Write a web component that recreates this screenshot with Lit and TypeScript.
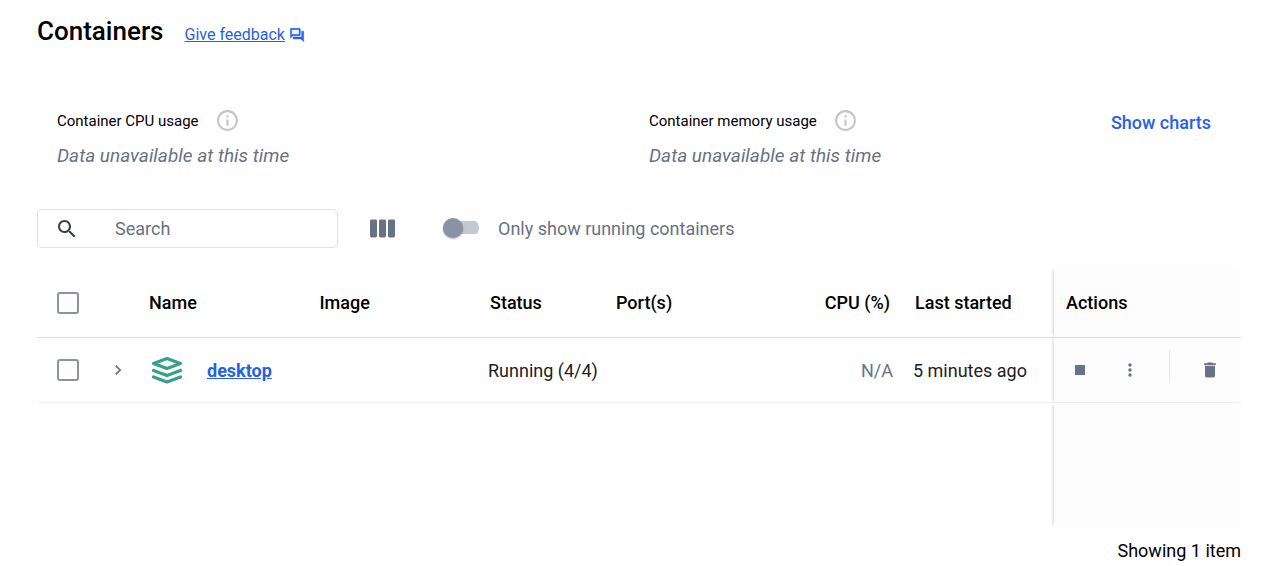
import { LitElement, html, css, svg } from "lit";
import { customElement, property, state } from "lit/decorators.js";

interface ContainerRow {
  name: string;
  image: string;
  status: string;
  ports: string;
  cpu: string;
  started: string;
}

const rows: ContainerRow[] = [
  { name: "desktop", image: "", status: "Running (4/4)", ports: "", cpu: "N/A", started: "5 minutes ago" },
];

const icon = (size: number, paths: unknown, viewBox = "0 0 24 24") => html`
  <svg width=${size} height=${size} viewBox=${viewBox} fill="currentColor" aria-hidden="true">${paths}</svg>
`;

const feedbackPath = svg`<path stroke="currentColor" stroke-width=".6" d="M15 4v7H5.17L4 12.17V4h11m1-2H3c-.55 0-1 .45-1 1v14l4-4h10c.55 0 1-.45 1-1V3c0-.55-.45-1-1-1zm5 4h-2v9H6v2c0 .55.45 1 1 1h11l4 4V7c0-.55-.45-1-1-1z"/>`;
const infoPath = svg`<path d="M11 7h2v2h-2zm0 4h2v6h-2zm1-9C6.48 2 2 6.48 2 12s4.48 10 10 10 10-4.48 10-10S17.52 2 12 2zm0 18c-4.41 0-8-3.59-8-8s3.59-8 8-8 8 3.59 8 8-3.59 8-8 8z"/>`;
const searchPath = svg`<path d="M15.5 14h-.79l-.28-.27C15.41 12.59 16 11.11 16 9.5 16 5.91 13.09 3 9.5 3S3 5.91 3 9.5 5.91 16 9.5 16c1.61 0 3.09-.59 4.23-1.57l.27.28v.79l5 4.99L20.49 19l-4.99-5zm-6 0C7.01 14 5 11.99 5 9.5S7.01 5 9.5 5 14 7.01 14 9.5 11.99 14 9.5 14z"/>`;
const columnsPath = svg`<rect x="0" y="0" width="7" height="18" rx="1.4"/><rect x="9" y="0" width="7" height="18" rx="1.4"/><rect x="18" y="0" width="7" height="18" rx="1.4"/>`;
const chevronPath = svg`<path d="M10 6 8.59 7.41 13.17 12l-4.58 4.59L10 18l6-6z"/>`;
const stopPath = svg`<path d="M6 6h12v12H6z"/>`;
const morePath = svg`<path d="M12 8c1.1 0 2-.9 2-2s-.9-2-2-2-2 .9-2 2 .9 2 2 2zm0 2c-1.1 0-2 .9-2 2s.9 2 2 2 2-.9 2-2-.9-2-2-2zm0 6c-1.1 0-2 .9-2 2s.9 2 2 2 2-.9 2-2-.9-2-2-2z"/>`;
const deletePath = svg`<path d="M6 19c0 1.1.9 2 2 2h8c1.1 0 2-.9 2-2V7H6v12zM19 4h-3.500l-1-1h-5l-1 1H5v2h14V4z"/>`;
const stackPath = svg`<g fill="none" stroke="currentColor" stroke-width="3.200" stroke-linecap="round" stroke-linejoin="round"><path d="M2.500 7.500 16 2.500l13.500 5L16 12.500z"/><path d="M2.500 14.500 16 19.500l13.500-5"/><path d="M2.500 21 16 26l13.500-5"/></g>`;

@customElement("usage-stat")
export class UsageStat extends LitElement {
  @property() label = "";

  static styles = css`
    :host { display: block; }
    svg { display: block; }
    .head { display: flex; align-items: center; gap: 16px; height: 25px; font-size: 15px; color: #000; }
    .info { display: flex; color: #c4c4c6; }
    .value { margin: 11px 0 0; font-size: 19px; line-height: 24px; font-style: italic; color: #677285; }
  `;

  render() {
    return html`
      <div class="head"><span>${this.label}</span><span class="info">${icon(25, infoPath)}</span></div>
      <p class="value">Data unavailable at this time</p>
    `;
  }
}

@customElement("app-root")
export class AppRoot extends LitElement {
  @state() private query = "";
  @state() private onlyRunning = false;

  static styles = css`
    :host {
      display: block;
      box-sizing: border-box;
      padding: 14px 22px 0 37px;
      background: #fff;
      color: #000;
      font-family: Roboto, "Liberation Sans", sans-serif;
      font-size: 18px;
      line-height: 24px;
    }
    * { box-sizing: border-box; }
    button { display: flex; align-items: center; justify-content: center; padding: 0; border: 0; background: none; font: inherit; color: #677285; cursor: pointer; }
    svg { display: block; }

    .title { display: flex; align-items: center; gap: 21px; }
    h1 { margin: 0; font-size: 26px; line-height: 34px; font-weight: 500; }
    .feedback { display: flex; align-items: center; gap: 4px; padding-top: 8px; font-size: 16px; line-height: 24px; color: #2560ed; }
    .feedback svg { flex: none; }

    .usage { display: grid; grid-template-columns: 1fr 1fr; align-items: start; margin-top: 60px; padding: 0 30px 0 20px; }
    .memory { display: flex; justify-content: space-between; align-items: start; padding-left: 15px; }
    .charts { height: 30px; font-weight: 500; color: #2560ed; }

    .toolbar { display: flex; align-items: center; margin-top: 41px; }
    .search { display: flex; align-items: center; gap: 36px; width: 301px; height: 39px; padding: 0 17px; border: 1px solid #e1e2e6; border-radius: 5px; color: #393f49; }
    .search svg { flex: none; }
    .search input { flex: 1; min-width: 0; padding: 0; border: 0; outline: 0; background: none; font: inherit; color: #000; }
    .search input::placeholder { color: #677285; opacity: 1; }
    .columns { margin: 0 48px 0 32px; }
    .toggle { display: flex; align-items: center; gap: 19px; color: #677285; }
    .switch {
      appearance: none;
      width: 36px;
      height: 20px;
      margin: 0 0 2px;
      background: linear-gradient(#c4c8d1, #c4c8d1) center / 100% 13px no-repeat;
      border-radius: 10px;
    }
    .switch::before { content: ""; display: block; width: 20px; height: 20px; border-radius: 50%; background: #8993a5; box-shadow: 0 1px 2px rgba(0, 0, 0, 0.3); }
    .switch:checked::before { margin-left: auto; background: #2560ed; }

    table { width: 100%; margin-top: 20px; table-layout: fixed; border-collapse: separate; border-spacing: 0; white-space: nowrap; }
    .c-check { width: 62px; }
    .c-expand { width: 38px; }
    .c-status { width: 126px; }
    .c-ports { width: 176px; }
    .c-cpu { width: 123px; }
    .c-started { width: 151px; }
    .c-actions { width: 187px; }
    th { height: 70px; padding: 0 12px; border-bottom: 1px solid #dcdde0; text-align: left; font-weight: 500; }
    th.num { padding-right: 13px; text-align: right; }
    td { height: 65px; padding: 2px 10px 0; border-bottom: 1px solid #f1f1f3; color: #1e2024; }
    td.num { text-align: right; color: #677285; }
    th.check, td.check { padding: 0 0 0 20px; }
    td.expand, td.name { padding: 0; }
    .check input { appearance: none; display: block; width: 22px; height: 22px; margin: 0; border: 2px solid #8993a8; border-radius: 3px; background: #fff; }
    .check input:checked { background: #2560ed; }
    .side { background: #fdfdfd; box-shadow: -3px 0 3px -2px rgba(0, 0, 0, 0.18); }
    tr.rest td { height: 124px; border: 0; }
    .expand button { width: 38px; height: 38px; }
    .identity { display: flex; align-items: center; gap: 24px; padding-left: 14px; color: #36a18b; }
    .identity svg { flex: none; }
    .identity a { padding-top: 2px; font-weight: 700; color: #2560ed; }
    td.side { padding: 0 15px; }
    .actions, .delete-group { display: flex; align-items: center; }
    .actions button { width: 22px; height: 30px; }
    .more, .delete-group { margin-left: 28px; }
    .rule { width: 1px; height: 32px; margin-bottom: 8px; background: #e9eaed; }
    .delete-group button { margin-left: 29px; }
    .footer { margin: 12px 0 0; text-align: right; }
  `;

  private get visibleRows() {
    const q = this.query.toLowerCase();
    return rows.filter(
      (r) => r.name.toLowerCase().includes(q) && (!this.onlyRunning || r.status.startsWith("Running")),
    );
  }

  private renderRow(r: ContainerRow) {
    return html`
      <tr>
        <td class="check"><input type="checkbox" aria-label="Select ${r.name}" /></td>
        <td class="expand"><button aria-label="Expand ${r.name}">${icon(20, chevronPath)}</button></td>
        <td class="name">
          <div class="identity">${icon(32, stackPath, "0 -2 32 32")}<a href="#${r.name}">${r.name}</a></div>
        </td>
        <td>${r.image}</td>
        <td>${r.status}</td>
        <td>${r.ports}</td>
        <td class="num">${r.cpu}</td>
        <td>${r.started}</td>
        <td class="side">
          <div class="actions">
            <button aria-label="Stop">${icon(20, stopPath)}</button>
            <button class="more" aria-label="More actions">${icon(20, morePath)}</button>
            <div class="delete-group">
              <span class="rule"></span>
              <button aria-label="Delete">${icon(20, deletePath)}</button>
            </div>
          </div>
        </td>
      </tr>
    `;
  }

  render() {
    const shown = this.visibleRows;
    return html`
      <header class="title">
        <h1>Containers</h1>
        <a class="feedback" href="#feedback"><span>Give feedback</span>${icon(16, feedbackPath)}</a>
      </header>

      <section class="usage">
        <usage-stat label="Container CPU usage"></usage-stat>
        <div class="memory">
          <usage-stat label="Container memory usage"></usage-stat>
          <button class="charts">Show charts</button>
        </div>
      </section>

      <div class="toolbar">
        <label class="search">
          ${icon(24, searchPath)}
          <input
            type="text"
            placeholder="Search"
            aria-label="Search"
            .value=${this.query}
            @input=${(e: Event) => (this.query = (e.target as HTMLInputElement).value)}
          />
        </label>
        <button class="columns" aria-label="Choose columns">${icon(25, columnsPath, "0 -3.500 25 25")}</button>
        <label class="toggle">
          <input
            class="switch"
            type="checkbox"
            role="switch"
            .checked=${this.onlyRunning}
            @change=${(e: Event) => (this.onlyRunning = (e.target as HTMLInputElement).checked)}
          />
          <span>Only show running containers</span>
        </label>
      </div>

      <table>
        <colgroup>
          <col class="c-check" /><col class="c-expand" /><col /><col /><col class="c-status" />
          <col class="c-ports" /><col class="c-cpu" /><col class="c-started" /><col class="c-actions" />
        </colgroup>
        <thead>
          <tr>
            <th class="check"><input type="checkbox" aria-label="Select all" /></th>
            <th></th>
            <th>Name</th>
            <th>Image</th>
            <th>Status</th>
            <th>Port(s)</th>
            <th class="num">CPU (%)</th>
            <th>Last started</th>
            <th class="side">Actions</th>
          </tr>
        </thead>
        <tbody>
          ${shown.map((r) => this.renderRow(r))}
          <tr class="rest"><td colspan="8"></td><td class="side"></td></tr>
        </tbody>
      </table>
      <p class="footer">Showing ${shown.length} ${shown.length === 1 ? "item" : "items"}</p>
    `;
  }
}
